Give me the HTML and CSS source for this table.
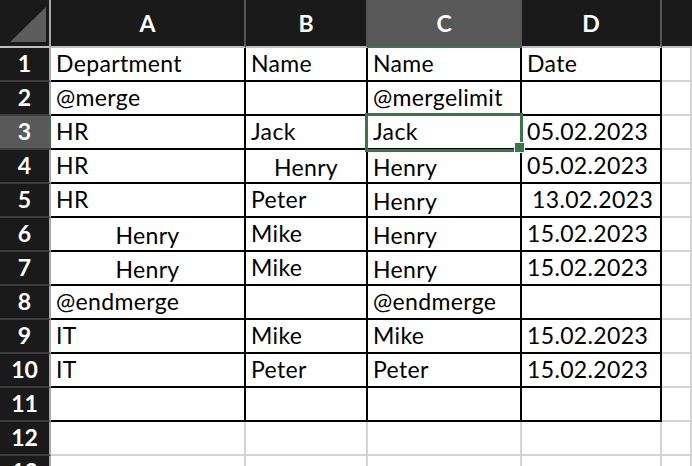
FILE: index.html
```html
<!DOCTYPE html>
<html>
<head>
<meta charset="utf-8">
<link rel="stylesheet" href="styles.css">
</head>
<body>
<div class="sheet">
  <div class="corner">
    <svg class="corner-tri" width="51" height="46" viewBox="0 0 51 46"><polygon points="10,42 46,42 46,7" fill="#5d5d5d"/></svg>
  </div>
  <div class="colhead">A</div>
  <div class="colhead">B</div>
  <div class="colhead sel">C</div>
  <div class="colhead">D</div>
  <div class="colhead last"></div>

  <div class="rowhead">1</div>
  <div class="cell t">Department</div>
  <div class="cell t">Name</div>
  <div class="cell t">Name</div>
  <div class="cell t">Date</div>
  <div class="cell g"></div>

  <div class="rowhead">2</div>
  <div class="cell t">@merge</div>
  <div class="cell t"></div>
  <div class="cell t">@mergelimit</div>
  <div class="cell t"></div>
  <div class="cell g"></div>

  <div class="rowhead sel">3</div>
  <div class="cell t">HR</div>
  <div class="cell t">Jack</div>
  <div class="cell t active"><span class="selbox"></span><span class="handle"></span>Jack</div>
  <div class="cell t">05.02.2023</div>
  <div class="cell g"></div>

  <div class="rowhead">4</div>
  <div class="cell t">HR</div>
  <div class="cell t center low">Henry</div>
  <div class="cell t low">Henry</div>
  <div class="cell t">05.02.2023</div>
  <div class="cell g"></div>

  <div class="rowhead">5</div>
  <div class="cell t">HR</div>
  <div class="cell t">Peter</div>
  <div class="cell t low">Henry</div>
  <div class="cell t shift">13.02.2023</div>
  <div class="cell g"></div>

  <div class="rowhead">6</div>
  <div class="cell t center low">Henry</div>
  <div class="cell t">Mike</div>
  <div class="cell t low">Henry</div>
  <div class="cell t">15.02.2023</div>
  <div class="cell g"></div>

  <div class="rowhead">7</div>
  <div class="cell t center low">Henry</div>
  <div class="cell t">Mike</div>
  <div class="cell t low">Henry</div>
  <div class="cell t">15.02.2023</div>
  <div class="cell g"></div>

  <div class="rowhead">8</div>
  <div class="cell t">@endmerge</div>
  <div class="cell t"></div>
  <div class="cell t">@endmerge</div>
  <div class="cell t"></div>
  <div class="cell g"></div>

  <div class="rowhead">9</div>
  <div class="cell t">IT</div>
  <div class="cell t">Mike</div>
  <div class="cell t">Mike</div>
  <div class="cell t">15.02.2023</div>
  <div class="cell g"></div>

  <div class="rowhead">10</div>
  <div class="cell t">IT</div>
  <div class="cell t">Peter</div>
  <div class="cell t">Peter</div>
  <div class="cell t">15.02.2023</div>
  <div class="cell g"></div>

  <div class="rowhead">11</div>
  <div class="cell t"></div>
  <div class="cell t"></div>
  <div class="cell t"></div>
  <div class="cell t"></div>
  <div class="cell g"></div>

  <div class="rowhead">12</div>
  <div class="cell g"></div>
  <div class="cell g"></div>
  <div class="cell g"></div>
  <div class="cell g"></div>
  <div class="cell g"></div>

  <div class="rowhead">13</div>
  <div class="cell g"></div>
  <div class="cell g"></div>
  <div class="cell g"></div>
  <div class="cell g"></div>
  <div class="cell g"></div>
</div>
</body>
</html>
```
FILE: styles.css
```css
html, body {
  margin: 0;
  padding: 0;
  background: #fff;
  overflow: hidden;
}
.sheet {
  display: grid;
  grid-template-columns: 51px 195px 122px 154px 140px 1fr;
  grid-template-rows: 48px repeat(13, 34px);
  width: 692px;
  height: 466px;
  overflow: hidden;
  font-family: Lato, "Noto Sans", sans-serif;
  font-size: 23px;
  line-height: 1;
}
.corner {
  background: #1a1a1a;
  border-right: 2px solid #a9a9a9;
  border-bottom: 2px solid #bfbfbf;
  box-sizing: border-box;
  position: relative;
}
.corner-tri {
  display: block;
}
.colhead {
  background: #1a1a1a;
  color: #fff;
  font-weight: 700;
  border-right: 2px solid #555;
  border-bottom: 2px solid #bfbfbf;
  box-sizing: border-box;
  display: flex;
  align-items: center;
  justify-content: center;
  padding-top: 1px;
}
.colhead.sel {
  background: #595959;
  border-bottom-color: #3a7649;
}
.colhead.last {
  border-right: none;
}
.rowhead {
  background: #1a1a1a;
  color: #fff;
  font-weight: 700;
  border-right: 2px solid #a9a9a9;
  border-bottom: 2px solid #3d3d3d;
  box-sizing: border-box;
  display: flex;
  align-items: flex-end;
  justify-content: center;
  padding-bottom: 5px;
}
.rowhead.sel {
  background: #595959;
  border-right-color: #3a7649;
}
.cell {
  box-sizing: border-box;
  display: flex;
  align-items: flex-end;
  padding-left: 5px;
  padding-bottom: 5px;
  color: #000;
  letter-spacing: 0.35px;
  white-space: nowrap;
  position: relative;
}
.cell.t {
  border-right: 2px solid #000;
  border-bottom: 2px solid #000;
}
.cell.g {
  border-right: 2px solid #d4d4d4;
  border-bottom: 2px solid #d4d4d4;
}
.cell.center {
  justify-content: center;
  padding-left: 0;
}
.cell.low {
  padding-bottom: 3px;
}
.cell.shift {
  padding-left: 10px;
}
.cell.active {
  z-index: 2;
}
.selbox {
  position: absolute;
  left: -3px;
  top: -3px;
  width: 158px;
  height: 39px;
  box-shadow: inset 0 0 0 3px #3a7649;
}
.handle {
  position: absolute;
  left: 146px;
  top: 26px;
  width: 9px;
  height: 9px;
  background: #3a7649;
  border: 1px solid #fff;
}
```
